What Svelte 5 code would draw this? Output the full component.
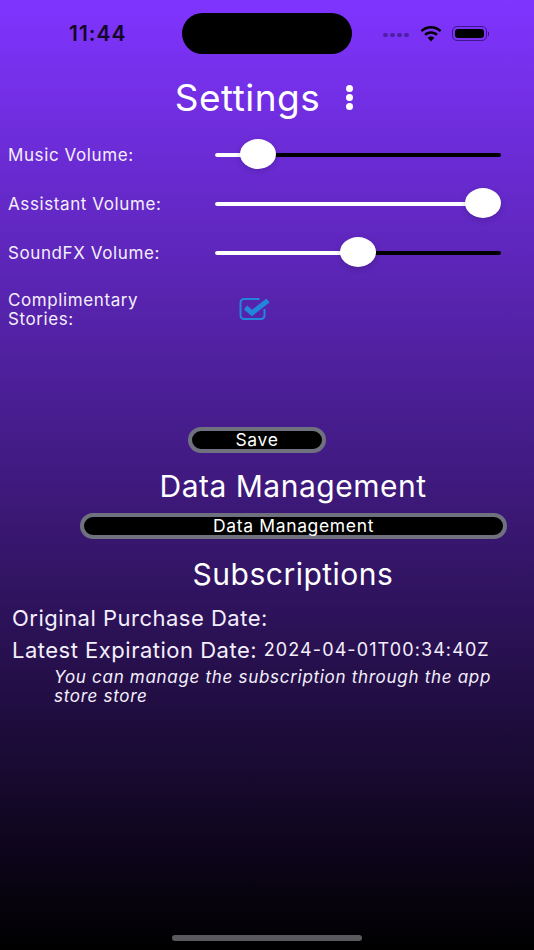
<script lang="ts">
	const sliders = [
		{ label: 'Music Volume:', value: 10 },
		{ label: 'Assistant Volume:', value: 100 },
		{ label: 'SoundFX Volume:', value: 50 }
	];
</script>

<div class="page">
	<header class="status">
		<span class="time">11:44</span>
		<div class="island"></div>
		<div class="status-icons">
			<div class="signal">
				<span></span><span></span><span></span><span></span>
			</div>
			<svg class="wifi" viewBox="0 0 24 17" width="24" height="17" aria-hidden="true">
				<path d="M12 3.6c3.3 0 6.4 1.3 8.7 3.5l1.7-1.9C19.600 2.500 15.900 1 12 1S4.400 2.500 1.600 5.200l1.700 1.900C5.600 4.900 8.700 3.600 12 3.600z" />
				<path d="M12 8.800c1.900 0 3.700.7 5.100 2l1.700-1.900C17 7.200 14.600 6.200 12 6.200s-5 1-6.800 2.700l1.700 1.900c1.400-1.300 3.200-2 5.100-2z" />
				<path d="M12 11.500c-1.200 0-2.400.5-3.300 1.300L12 16.400l3.300-3.600c-.9-.8-2.100-1.300-3.300-1.300z" />
			</svg>
			<div class="battery"><div class="battery-fill"></div></div>
			<div class="battery-cap"></div>
		</div>
	</header>

	<div class="title-row">
		<h1>Settings</h1>
		<div class="kebab" aria-hidden="true"><span></span><span></span><span></span></div>
	</div>

	<section class="sliders">
		{#each sliders as s}
			<div class="row">
				<span class="label slider-label">{s.label}</span>
				<div class="slider">
					<div class="track">
						<div class="fill" style="width: calc(18px + (100% - 36px) * {s.value / 100})"></div>
					</div>
					<div class="thumb-rail"><div class="thumb" style="left: {s.value}%"></div></div>
				</div>
			</div>
		{/each}
		<div class="row check-row">
			<span class="label">Complimentary Stories:</span>
			<svg class="check" viewBox="0 0 32 24" width="32" height="24" aria-hidden="true">
				<path d="M20.500 2H5a3.500 3.500 0 0 0-3.500 3.500v13A3.500 3.500 0 0 0 5 22h17a3.500 3.500 0 0 0 3.500-3.500V12" fill="none" stroke="#2186dc" stroke-width="2" />
				<path d="M6.500 10.500 13 16 29 3.500" fill="none" stroke="#2186dc" stroke-width="5" />
			</svg>
		</div>
	</section>

	<div class="save-wrap"><button class="pill save">Save</button></div>

	<h2 class="dm-title">Data Management</h2>
	<div class="dm-wrap"><button class="pill dm">Data Management</button></div>

	<h2 class="sub-title">Subscriptions</h2>
	<div class="info">Original Purchase Date:</div>
	<div class="info latest">Latest Expiration Date: <span class="date">2024-04-01T00:34:40Z</span></div>
	<p class="note">You can manage the subscription through the app store store</p>

	<div class="home"></div>
</div>

<style>
	:global(body) {
		margin: 0;
	}

	.page {
		position: relative;
		height: 950px;
		overflow: hidden;
		background: linear-gradient(180deg, #8034ff 0%, #000 100%);
		color: #fff;
		font-family: Inter, 'Liberation Sans', sans-serif;
	}

	.status {
		display: flex;
		align-items: center;
		height: 41px;
		padding-top: 13px;
	}

	.time {
		width: 182px;
		padding-left: 69px;
		box-sizing: border-box;
		font-size: 21px;
		font-weight: 600;
		letter-spacing: 1px;
		color: #14082a;
	}

	.island {
		width: 170px;
		height: 41px;
		border-radius: 21px;
		background: #000;
	}

	.status-icons {
		display: flex;
		align-items: center;
		padding-left: 31px;
	}

	.signal {
		display: flex;
		gap: 2px;
		margin-top: 3px;
	}

	.signal span {
		width: 5px;
		height: 4px;
		border-radius: 2px;
		background: #4f1fa3;
	}

	.wifi {
		margin-left: 10px;
		fill: #000;
	}

	.battery {
		box-sizing: border-box;
		width: 35px;
		height: 15px;
		margin-left: 9px;
		padding: 2px;
		border: 1px solid #3d188a;
		border-radius: 5px;
	}

	.battery-fill {
		height: 100%;
		border-radius: 3px;
		background: #000;
	}

	.battery-cap {
		width: 1px;
		height: 4px;
		margin-left: 1px;
		background: #3d188a;
	}

	.title-row {
		display: flex;
		justify-content: center;
		align-items: center;
		gap: 26px;
		height: 42px;
		margin-top: 22px;
		padding-right: 6px;
	}

	h1 {
		margin: 0;
		font-size: 37px;
		font-weight: 400;
		letter-spacing: 0.5px;
	}

	.kebab {
		display: flex;
		flex-direction: column;
		gap: 2px;
	}

	.kebab span {
		width: 7px;
		height: 7px;
		border-radius: 50%;
		background: #fff;
	}

	.sliders {
		display: flex;
		flex-direction: column;
		margin-top: 12px;
		padding-left: 8px;
	}

	.row {
		display: flex;
		align-items: center;
		height: 49px;
	}

	.label {
		width: 207px;
		flex: none;
		font-size: 17px;
		letter-spacing: 0.6px;
		line-height: 19px;
		color: #f4effc;
	}

	.slider-label {
		padding-top: 2px;
	}

	.slider {
		position: relative;
		width: 286px;
		height: 4px;
	}

	.track {
		height: 4px;
		border-radius: 2px;
		background: #000;
		overflow: hidden;
	}

	.fill {
		height: 100%;
		background: #fff;
	}

	.thumb-rail {
		position: absolute;
		inset: 0 18px;
	}

	.thumb {
		position: absolute;
		top: -14px;
		width: 36px;
		height: 30px;
		margin-left: -18px;
		border-radius: 50%;
		background: #fff;
		box-shadow: 0 2px 6px rgba(0, 0, 0, 0.18);
	}

	.check-row {
		align-items: flex-start;
		height: auto;
		margin-top: 14px;
	}

	.check-row .label {
		width: 160px;
	}

	.check {
		margin: 6px 0 0 71px;
	}

	.save-wrap {
		display: flex;
		justify-content: center;
		margin-top: 98px;
		padding-right: 20px;
	}

	.pill {
		box-sizing: border-box;
		border: 4px solid #6f717f;
		background: #000;
		color: #fff;
		font-family: inherit;
		font-size: 17.500px;
		line-height: 17px;
		letter-spacing: 0.65px;
		padding: 0 0 1px;
	}

	.save {
		width: 138px;
		height: 26px;
		border-radius: 13px;
	}

	h2 {
		margin: 0;
		font-size: 30px;
		font-weight: 400;
		letter-spacing: 0.5px;
		line-height: 36px;
		text-align: center;
		padding-left: 52px;
	}

	.dm-title {
		margin-top: 15px;
	}

	.dm-wrap {
		display: flex;
		justify-content: flex-end;
		margin-top: 9px;
		padding-right: 27px;
	}

	.dm {
		width: 427px;
		height: 26px;
		border-radius: 13px;
	}

	.sub-title {
		margin-top: 17px;
	}

	.info {
		margin-top: 14px;
		padding-left: 12px;
		font-size: 22px;
		line-height: 24px;
		letter-spacing: 0.5px;
		color: #f4effc;
	}

	.latest {
		margin-top: 8px;
	}

	.date {
		position: relative;
		top: -2px;
		font-size: 18px;
		letter-spacing: 1.1px;
	}

	.note {
		margin: 4px 0 0 54px;
		width: 450px;
		font-size: 17px;
		font-style: italic;
		line-height: 19px;
		letter-spacing: 0.7px;
		color: #f4effc;
	}

	.home {
		position: absolute;
		left: 172px;
		bottom: 9px;
		width: 190px;
		height: 6px;
		border-radius: 3px;
		background: #5a5a5e;
	}
</style>
